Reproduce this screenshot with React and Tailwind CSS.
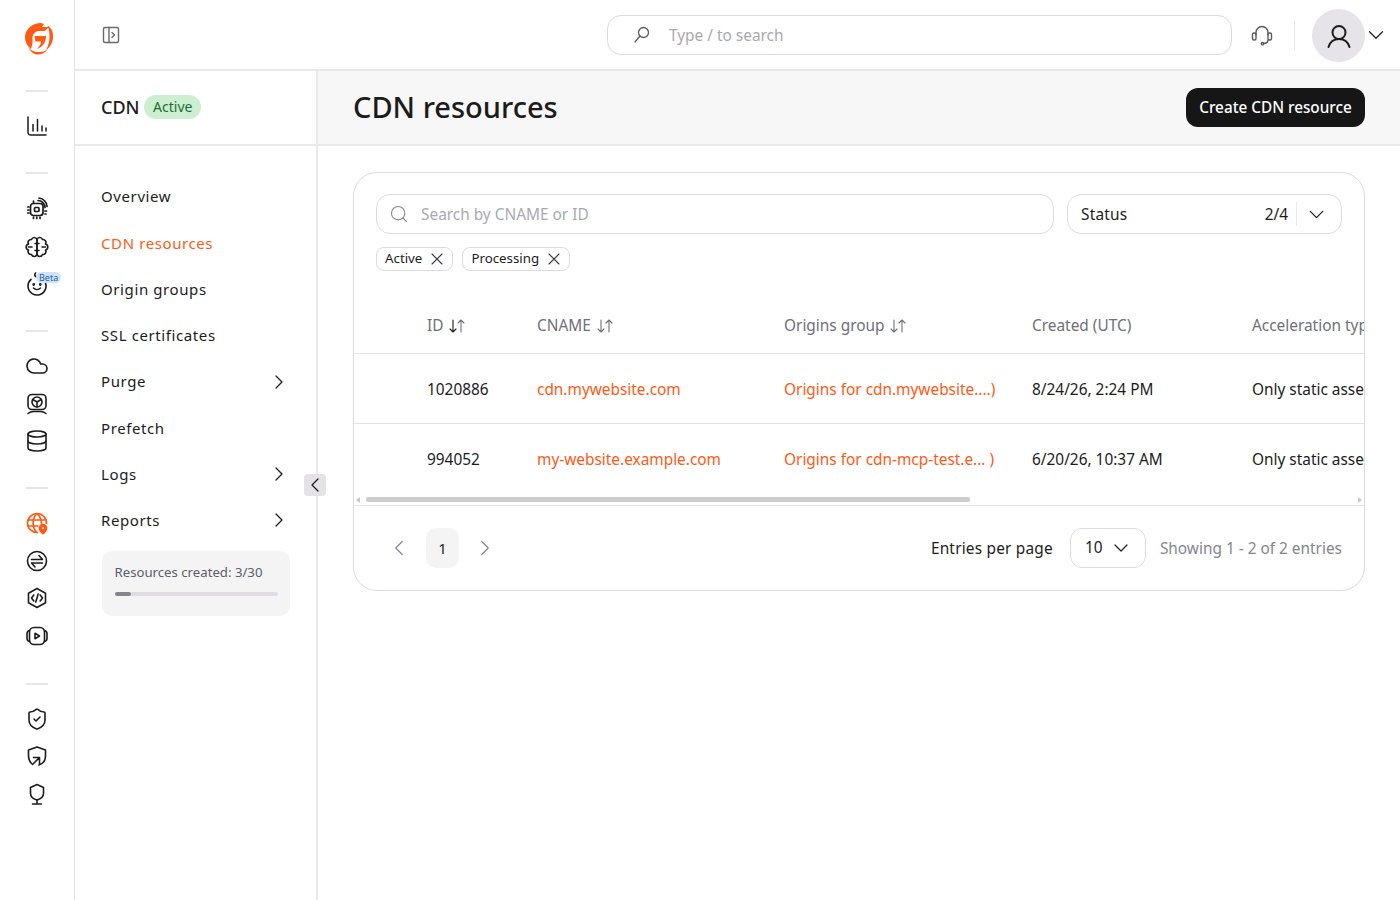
import React from "react";
import { ChevronRight, ChevronLeft, ChevronDown, Search, Cloud, Database, ShieldCheck } from "lucide-react";

const Svg = ({ children, className = "text-[#1c1c1c]", size = 24, sw = 1.5, vb = "0 0 24 24" }) => (
  <svg width={size} height={size} viewBox={vb} fill="none" stroke="currentColor" strokeWidth={sw} strokeLinecap="round" strokeLinejoin="round" className={className}>
    {children}
  </svg>
);

const Logo = () => (
  <svg width="29" height="32" viewBox="0 0 29 32" className="ml-[4px]" fill="#ff5a14">
    <path d="M16 0C8 0 0 6 0 14C0 19 2 23 6 26C7 22.500 8 20 7.500 16C7 11.500 10 8.500 14 8L20 8L24 4L17 4L19 1Z" />
    <path d="M9.500 13H21C21 19 18 24 12 26C15 23 16 20.500 16 18.500H10.500Z" />
    <path d="M22.500 2.500C27 5 28.500 10 28 15C27.500 20 25 24.500 21 27C23.500 23 24.500 18 24.500 14C24.500 10 24 6 22.500 2.500Z" />
    <path d="M3 24C6 28 10 29 14 29C18 29 21 28 23 26C20 30 16 32 12 31.500C8 31 5 28 3 24Z" />
  </svg>
);

const IconChart = () => (
  <Svg>
    <path d="M3 3v15.500A2.500 2.500 0 0 0 5.500 21H21" />
    <path d="M8 10.500V17M12.500 5.500V17M17 12V17M21 14v3" />
  </Svg>
);
const IconChip = () => (
  <Svg sw={1.7}>
    <rect x="5.500" y="6.500" width="12.500" height="12" rx="3" />
    <rect x="9.500" y="10.500" width="4.500" height="4" rx="1" />
    <path d="M8.500 4V5.500M2.800 10H4M2.800 13H4M2.800 16H4M8.500 20V21.500M11.800 20V21.500M15 20V21.500" />
    <path d="M13 3.500a7 7 0 0 1 7 7M14 1a9 9 0 0 1 8 8.500M20 14h1.500M20 17h1" />
  </Svg>
);
const BrainHalf = () => (
  <>
    <path d="M12 4.500a2.900 2.900 0 0 0-5.500 0a3 3 0 0 0-3 4.500a3.100 3.100 0 0 0 0 6a3 3 0 0 0 3 4.500a2.900 2.900 0 0 0 5.500 0Z" />
    <path d="M12 8.500H10M3.500 12H7M12 15.500H10" />
  </>
);
const IconBrain = () => (
  <Svg sw={1.6}>
    <BrainHalf />
    <g transform="matrix(-1 0 0 1 24 0)"><BrainHalf /></g>
  </Svg>
);
const IconBaby = () => (
  <Svg sw={1.6}>
    <path d="M12 5a9 9 0 1 1-6 2.300M12 5C10 4.500 9 3 10.500 1" />
    <circle cx="8.700" cy="12.500" r=".6" fill="currentColor" />
    <circle cx="15.300" cy="12.500" r=".6" fill="currentColor" />
    <path d="M8.500 16c2 2 5 2 7 0" />
  </Svg>
);
const IconModel = () => (
  <Svg sw={1.6}>
    <rect x="3" y="2.500" width="18" height="15" rx="4" />
    <circle cx="12" cy="10" r="5" />
    <path d="M12 10V15M12 10 7.800 7.500M12 10l4.200-2.500M3 21.500c2-1.600 4-2 5.500-2h7c1.500 0 3.500.4 5.500 2" />
  </Svg>
);
const IconGlobePin = () => (
  <Svg className="text-[#ff5a14]" sw={1.7}>
    <path d="M21.500 12.500A9.500 9.500 0 1 0 12.500 21.500" />
    <path d="M2.800 9h18.400M2.800 15h10M11.500 2.800C7 8 7 16 11.500 21.200M12.500 2.800c3 3.500 4 7 4 9.700" />
    <path d="M18 22.500s-3.500-2.800-3.500-5.300a3.500 3.500 0 0 1 7 0c0 2.500-3.500 5.300-3.500 5.300z" fill="#ff5a14" stroke="#ff5a14" />
    <circle cx="18" cy="17.200" r=".9" fill="#ffffff" stroke="none" />
  </Svg>
);
const IconSwap = () => (
  <Svg sw={1.6}>
    <circle cx="12" cy="12" r="9.500" />
    <path d="M6.500 10.500h11L14 6.500M17.500 14h-11l3.500 4" />
  </Svg>
);
const IconCode = () => (
  <Svg sw={1.6}>
    <path d="M12 2.500 20.500 7.200v9.600L12 21.500l-8.500-4.700V7.200z" />
    <path d="M8.800 9 6.500 12l2.300 3M15.200 9l2.300 3-2.300 3M13.200 8 10.800 16" />
  </Svg>
);
const IconVideo = () => (
  <Svg sw={1.6}>
    <rect x="4.500" y="3.500" width="15" height="17" rx="4.500" />
    <path d="M4.500 6.500C2.800 7 2 8 2 9.500v5c0 1.500.8 2.500 2.500 3M19.500 6.500c1.700.5 2.500 1.500 2.500 3v5c0 1.500-.8 2.500-2.500 3" />
    <path d="M10 9.300v5.400l4.500-2.700z" />
  </Svg>
);
const IconShieldArrow = () => (
  <Svg sw={1.6}>
    <path d="M6.500 19.500C4.500 17.500 3.500 15 3.500 12V6L12 3l8.500 3v6c0 4-2.500 7.500-6.500 9" />
    <path d="M7.500 20.500 14 14M8.500 13.500H14.500V19.500" />
  </Svg>
);
const IconBadge = () => (
  <Svg sw={1.6}>
    <path d="M12 2.500 18.500 5.500v6c0 3-3 5.500-6.500 6.500C8.500 17 5.500 14.500 5.500 11.500v-6z" />
    <path d="M12 18v3.500M7.500 22h9" />
  </Svg>
);
const IconHeadset = () => (
  <Svg className="text-[#5a5a60]" sw={1.4}>
    <path d="M6 12V9.500a6 6 0 0 1 12 0V12" />
    <rect x="2.500" y="10" width="3.500" height="7" rx="1.500" />
    <rect x="18" y="10" width="3.500" height="7" rx="1.500" />
    <path d="M18 17c0 2.500-2 3.500-4.500 3.500" />
    <circle cx="12.500" cy="20.700" r="1.200" />
  </Svg>
);
const IconPanel = () => (
  <Svg size={20} vb="0 0 20 20" className="text-[#6a6a72]" sw={1.4}>
    <rect x="2.500" y="2.500" width="15" height="15" rx="1.500" />
    <path d="M8 2.500v15M11 7.500l2.500 2.500-2.500 2.500" />
  </Svg>
);
const IconLoupe = () => (
  <Svg size={20} vb="0 0 20 20" className="text-[#5a5a60]" sw={1.3}>
    <circle cx="11.500" cy="7.500" r="5" />
    <path d="M8 11 3 17" />
  </Svg>
);
const IconUser = () => (
  <Svg size={28} vb="0 0 28 28" sw={2}>
    <circle cx="14" cy="10.500" r="6.500" />
    <path d="M3.500 25c1.500-5 5-8 10.500-8s9 3 10.500 8" />
  </Svg>
);
const IconX = () => (
  <svg width="12" height="12" viewBox="0 0 12 12" fill="none" stroke="#3a3a40" strokeWidth="1.100" strokeLinecap="round" className="shrink-0">
    <path d="M1 1 11 11M11 1 1 11" />
  </svg>
);

const Divider = () => <div className="h-[2px] w-[22px] bg-[#e6e6e8]" />;

const RailGroup = ({ children }) => <div className="flex flex-col items-center gap-[13.500px]">{children}</div>;

const Rail = () => (
  <aside className="flex w-[75px] shrink-0 flex-col items-center border-r border-[#e4e4e6] pt-[23px]">
    <Logo />
    <div className="mt-[35px]"><Divider /></div>
    <div className="mt-[22px]"><IconChart /></div>
    <div className="mt-[34px]"><Divider /></div>
    <div className="mt-[23px]">
      <RailGroup>
        <IconChip />
        <IconBrain />
        <div className="relative">
          <IconBaby />
          <span className="absolute top-0 left-[11px] rounded-full bg-[#cfe3f8] px-[3px] text-[9px] leading-[11px] text-[#1f5fa8]">Beta</span>
        </div>
      </RailGroup>
    </div>
    <div className="mt-[34px]"><Divider /></div>
    <div className="mt-[22px]">
      <RailGroup>
        <Cloud size={24} strokeWidth={1.6} className="text-[#1c1c1c]" />
        <IconModel />
        <Database size={24} strokeWidth={1.6} className="text-[#1c1c1c]" />
      </RailGroup>
    </div>
    <div className="mt-[34px]"><Divider /></div>
    <div className="mt-[22px]">
      <RailGroup>
        <IconGlobePin />
        <IconSwap />
        <IconCode />
        <IconVideo />
      </RailGroup>
    </div>
    <div className="mt-[35px]"><Divider /></div>
    <div className="mt-[22px]">
      <RailGroup>
        <ShieldCheck size={24} strokeWidth={1.6} className="text-[#1c1c1c]" />
        <IconShieldArrow />
        <IconBadge />
      </RailGroup>
    </div>
  </aside>
);

const TopBar = () => (
  <header className="flex h-[71px] shrink-0 items-center border-b-2 border-[#e9e9ea] pl-[26px]">
    <IconPanel />
    <div className="ml-[486px] flex h-10 w-[625px] items-center rounded-[14px] border border-[#dcdce0] pl-[24px]">
      <IconLoupe />
      <span className="ml-[17px] pt-[3px] text-[15.400px] text-[#a9a9b3]">Type / to search</span>
    </div>
    <div className="ml-[18px]"><IconHeadset /></div>
    <div className="ml-[20px] h-[30px] w-px bg-[#e6e6e8]" />
    <div className="ml-[17px] mt-[2px] flex h-[53px] w-[53px] items-center justify-center rounded-full bg-[#e6e4e8]">
      <IconUser />
    </div>
    <ChevronDown size={26} strokeWidth={1.1} className="-ml-[2px] shrink-0 text-[#1c1c1c]" />
  </header>
);

const navItems = [
  ["Overview", false, false],
  ["CDN resources", true, false],
  ["Origin groups", false, false],
  ["SSL certificates", false, false],
  ["Purge", false, true],
  ["Prefetch", false, false],
  ["Logs", false, true],
  ["Reports", false, true],
];

const Sidebar = () => (
  <nav className="relative flex w-[243px] shrink-0 flex-col border-r-2 border-[#e9e9ea]">
    <div className="flex h-[75px] shrink-0 items-center gap-[4.500px] border-b-2 border-[#e9e9ea] pl-[26px]">
      <span className="text-[18px] font-medium text-[#1c1c1c]">CDN</span>
      <span className="mb-[2px] flex h-6 items-center rounded-full bg-[#cdeed1] px-[9px] text-[14px] text-[#1c6e35]">Active</span>
    </div>
    <div className="flex flex-col px-[26px] pt-[27.500px]">
      {navItems.map(([label, active, chevron]) => (
        <div key={label} className={`flex h-[46.250px] items-center justify-between text-[15px] tracking-[0.6px] ${active ? "text-[#ff5a14]" : "text-[#1c1c1c]"}`}>
          <span>{label}</span>
          {chevron && <ChevronRight size={24} strokeWidth={1.3} className="-mr-px text-[#1c1c1c]" />}
        </div>
      ))}
      <div className="ml-px mt-[7.500px] h-[65px] w-[188px] rounded-[10px] bg-[#f4f4f5] px-[12.500px] pt-[12px]">
        <div className="text-[13.200px] leading-[18px] text-[#5d5d68]">Resources created: 3/30</div>
        <div className="mt-[11px] h-1 w-[163px] rounded-full bg-[#dfdde3]">
          <div className="h-1 w-[16px] rounded-full bg-[#85858b]" />
        </div>
      </div>
    </div>
    <button className="absolute -right-[9.500px] top-[403px] flex h-[22px] w-[22px] items-center justify-center rounded-[4px] bg-[#e4e2e7]">
      <ChevronLeft size={24} strokeWidth={1.3} className="shrink-0 text-[#1c1c1c]" />
    </button>
  </nav>
);

const SortArrows = ({ dark }) => (
  <svg width="20" height="16" viewBox="0 0 20 16" fill="none" strokeWidth="1.100" strokeLinecap="round" strokeLinejoin="round" className="ml-[4px]">
    <path d="M6 2v12M3 11 6 14l3-3" stroke={dark ? "#1c1c1c" : "#6f6f78"} />
    <path d="M14 14V2M11 5 14 2l3 3" stroke="#6f6f78" />
  </svg>
);

const Chip = ({ label }) => (
  <span className="flex h-6 items-center gap-[9px] rounded-[8px] border border-[#dcdce0] pl-[8px] pr-[9px] text-[13.300px] text-[#1c1c1c]">
    {label}
    <IconX />
  </span>
);

const th = "text-left text-[15.400px] leading-[22px] font-normal text-[#6f6f78] p-0 pt-[2px]";
const td = "p-0 pt-[4px] text-[15.400px] leading-[22px] whitespace-nowrap";

const Row = ({ id, cname, origin, created }) => (
  <tr className="h-[70px] border-b border-[#e4e4e6] last:border-b-0">
    <td className={td}></td>
    <td className={`${td} text-[#1c1c1c]`}>{id}</td>
    <td className={`${td} text-[#ff5a14]`}>{cname}</td>
    <td className={`${td} text-[#ff5a14]`}>{origin}</td>
    <td className={`${td} text-[#1c1c1c]`}>{created}</td>
    <td className={`${td} text-[#1c1c1c]`}>Only static assets</td>
  </tr>
);

const Card = () => (
  <section className="flex h-[419px] flex-col overflow-hidden rounded-[24px] border border-[#dcdce0] bg-white">
    <div className="flex gap-[13px] px-[22px] pt-[21px]">
      <div className="flex h-10 flex-1 items-center rounded-[14px] border border-[#dcdce0] pl-[12px]">
        <Search size={20} strokeWidth={1.3} className="text-[#85858f]" />
        <span className="ml-[12px] pt-[2px] text-[15.400px] text-[#a9a9b3]">Search by CNAME or ID</span>
      </div>
      <div className="flex h-10 w-[275px] items-center rounded-[14px] border border-[#dcdce0] pl-[13px] pr-[12px] text-[15.400px] text-[#1c1c1c]">
        <span className="flex-1 pt-[2px] tracking-[0.2px]">Status</span>
        <span className="pt-[2px]">2/4</span>
        <span className="ml-[8px] mr-[7px] h-6 w-px bg-[#e9e9ea]" />
        <ChevronDown size={25} strokeWidth={1.2} />
      </div>
    </div>
    <div className="flex gap-[9px] px-[22px] pt-[13px]">
      <Chip label="Active" />
      <Chip label="Processing" />
    </div>
    <div className="mt-[26px] overflow-hidden">
      <table className="w-[1180px] table-fixed border-collapse">
        <colgroup>
          <col className="w-[73px]" />
          <col className="w-[110px]" />
          <col className="w-[247px]" />
          <col className="w-[248px]" />
          <col className="w-[220px]" />
          <col className="w-[282px]" />
        </colgroup>
        <thead>
          <tr className="h-[56px] border-b border-[#e4e4e6]">
            <th className={th}></th>
            <th className={th}><span className="flex items-center">ID<SortArrows dark /></span></th>
            <th className={th}><span className="flex items-center">CNAME<SortArrows /></span></th>
            <th className={th}><span className="flex items-center">Origins group<SortArrows /></span></th>
            <th className={th}>Created (UTC)</th>
            <th className={th}>Acceleration type</th>
          </tr>
        </thead>
        <tbody>
          <Row id="1020886" cname="cdn.mywebsite.com" origin="Origins for cdn.mywebsite....)" created="8/24/26, 2:24 PM" />
          <Row id="994052" cname="my-website.example.com" origin="Origins for cdn-mcp-test.e... )" created="6/20/26, 10:37 AM" />
        </tbody>
      </table>
    </div>
    <div className="flex h-[13px] shrink-0 items-start border-b border-[#e4e4e6] px-[2px] pt-[4px]">
      <span className="h-0 w-0 border-y-[3px] border-r-[4px] border-y-transparent border-r-[#c8c8cc]" />
      <div className="ml-[6px] h-[5px] w-[604px] rounded-full bg-[#cdcdd1]" />
      <span className="ml-auto h-0 w-0 border-y-[3px] border-l-[4px] border-y-transparent border-l-[#c8c8cc]" />
    </div>
    <div className="flex flex-1 items-center pl-[32px] pr-[22px]">
      <ChevronLeft size={26} strokeWidth={1.1} className="text-[#85858f]" />
      <span className="ml-[14px] flex h-10 w-[33px] items-center justify-center rounded-[10px] bg-[#f4f4f5] text-[15px] text-[#1c1c1c]">1</span>
      <ChevronRight size={26} strokeWidth={1.1} className="ml-[13px] text-[#85858f]" />
      <span className="ml-auto pt-[2px] text-[15.400px] tracking-[0.2px] text-[#1c1c1c]">Entries per page</span>
      <div className="ml-[17px] flex h-10 w-[76px] items-center gap-[7px] rounded-[12px] border border-[#dcdce0] pl-[14px] text-[15.400px] text-[#1c1c1c]">
        10
        <ChevronDown size={24} strokeWidth={1.2} />
      </div>
      <span className="ml-[14px] pt-[2px] text-[15.400px] text-[#85858f]">Showing 1 - 2 of 2 entries</span>
    </div>
  </section>
);

const Main = () => (
  <main className="flex min-w-0 flex-1 flex-col">
    <div className="flex h-[75px] shrink-0 items-center justify-between border-b-2 border-[#e9e9ea] bg-[#f7f7f7] px-[35px]">
      <h1 className="mb-[2px] text-[29px] font-medium text-[#1c1c1c]">CDN resources</h1>
      <button className="flex h-[39px] w-[179px] items-center justify-center rounded-[12px] bg-[#161616] text-[15.300px] font-medium text-white">Create CDN resource</button>
    </div>
    <div className="px-[35px] pt-[26px]">
      <Card />
    </div>
  </main>
);

export default function App() {
  return (
    <div className="flex h-[900px] w-[1400px] overflow-hidden bg-white font-['Noto_Sans',sans-serif]">
      <Rail />
      <div className="flex min-w-0 flex-1 flex-col">
        <TopBar />
        <div className="flex min-h-0 flex-1">
          <Sidebar />
          <Main />
        </div>
      </div>
    </div>
  );
}
